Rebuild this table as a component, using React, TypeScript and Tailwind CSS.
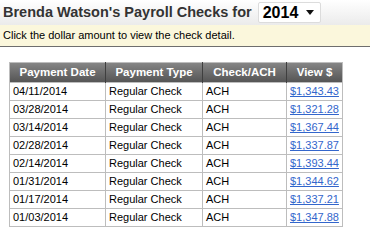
const checks = [
  { date: "04/11/2014", amount: "$1,343.43" },
  { date: "03/28/2014", amount: "$1,321.28" },
  { date: "03/14/2014", amount: "$1,367.44" },
  { date: "02/28/2014", amount: "$1,337.87" },
  { date: "02/14/2014", amount: "$1,393.44" },
  { date: "01/31/2014", amount: "$1,344.62" },
  { date: "01/17/2014", amount: "$1,337.21" },
  { date: "01/03/2014", amount: "$1,347.88" },
];

const App = () => {
  return (
    <div className="h-[240px] w-[370px] overflow-hidden bg-white font-['Liberation_Sans',Arial,sans-serif]">
      {/* title bar */}
      <div className="flex h-[25px] items-center bg-gradient-to-b from-white to-[#ebebeb] pl-[3px]">
        <h1 className="text-[14.5px] font-bold leading-none text-[#333]">Brenda Watson's Payroll Checks for</h1>
        <div className="ml-[6px] flex h-[21px] w-[63px] items-center justify-between rounded-[2px] border border-[#dcdcdc] bg-white pl-[4px] pr-[6px]">
          <span className="text-[16px] font-bold leading-none text-black">2014</span>
          <svg width="8" height="5" viewBox="0 0 8 5">
            <path d="M0 0h8L4 5z" fill="#111" />
          </svg>
        </div>
      </div>
      <div className="flex h-[22px] items-center border-b border-[#6e6e6e] bg-[#fbf7dc] pl-[3px] text-[11px] text-black">
        Click the dollar amount to view the check detail.
      </div>

      <table className="ml-[9px] mt-[15px] w-[334px] table-fixed border-collapse border border-[#bdbdbd] text-[11px]">
        <thead>
          <tr className="h-[20px] bg-gradient-to-b from-[#858585] to-[#535353] text-white">
            <th className="w-[96px] border-r border-[#3f3f3f] text-[11.5px] font-bold">Payment Date</th>
            <th className="w-[97px] border-r border-[#3f3f3f] text-[11.5px] font-bold">Payment Type</th>
            <th className="w-[84px] border-r border-[#3f3f3f] text-[11.5px] font-bold">Check/ACH</th>
            <th className="text-[11.5px] font-bold">View $</th>
          </tr>
        </thead>
        <tbody>
          {checks.map((check) => (
            <tr key={check.date} className="h-[18px] text-black">
              <td className="border border-[#bdbdbd] pl-[3px]">{check.date}</td>
              <td className="border border-[#bdbdbd] pl-[3px]">Regular Check</td>
              <td className="border border-[#bdbdbd] pl-[3px]">ACH</td>
              <td className="border border-[#bdbdbd] pl-[3px]">
                <a href="#" className="text-[#3366cc] underline">
                  {check.amount}
                </a>
              </td>
            </tr>
          ))}
        </tbody>
      </table>
    </div>
  );
};

export default App;
